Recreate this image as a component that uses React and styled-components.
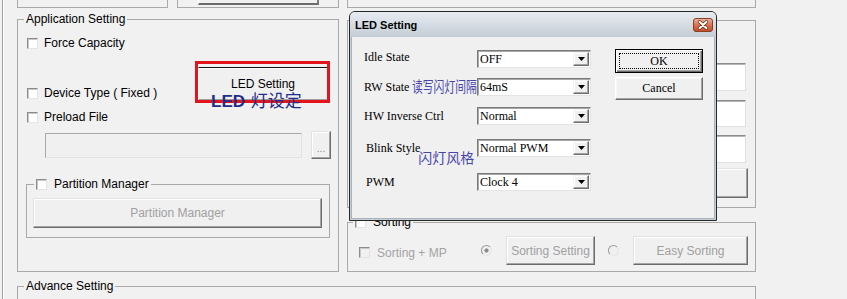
import React from "react";
import styled, { createGlobalStyle } from "styled-components";

const GlobalStyle = createGlobalStyle`
  html, body {
    margin: 0;
    padding: 0;
    background: #f1f1f1;
  }
  body {
    font-family: "Liberation Sans", Arial, sans-serif;
    font-size: 12px;
    color: #000;
  }
`;

const Screen = styled.div`
  position: relative;
  width: 847px;
  height: 299px;
  overflow: hidden;
  box-sizing: border-box;
  padding-left: 2px;
  background: #f1f1f1;
`;

const Frame = styled.div`
  height: 100%;
  border-left: 1px solid #a0a0a0;
  box-shadow: inset 1px 0 #fff;
  padding-left: 14px;
`;

const Layout = styled.div`
  display: grid;
  grid-template-columns: 322px 409px;
  grid-template-rows: 8px 260px 60px;
  column-gap: 8px;
  row-gap: 4px;
`;

const Strip = styled.div`
  display: flex;
  gap: 9px;
`;

const StubBox = styled.div`
  box-sizing: border-box;
  width: ${(p) => p.$w}px;
  height: 8px;
  border: 1px solid #a9a9a9;
  border-top: none;
  display: flex;
  align-items: flex-start;
  padding-left: 20px;
`;

const StubButton = styled.div`
  box-sizing: border-box;
  width: 121px;
  height: 5px;
  background: #f0f0f0;
  border-left: 1px solid #fff;
  border-right: 2px solid #7a7a7a;
  border-bottom: 2px solid #6a6a6a;
`;

const Group = styled.fieldset`
  margin: ${(p) => p.$margin || "0"};
  padding: 0;
  border: 1px solid #a9a9a9;
  min-width: 0;
  box-sizing: border-box;
  ${(p) => p.$grow && "flex: 1;"}
  ${(p) => p.$span && "grid-column: 1 / -1;"}
`;

const Legend = styled.legend`
  margin-left: ${(p) => p.$offset}px;
  padding: 0 2px;
  line-height: 14px;
  height: 14px;
  font-size: 12px;
`;

const LegendInner = styled.span`
  display: inline-flex;
  align-items: center;
  gap: 7px;
  height: 14px;
`;

const GroupBody = styled.div`
  padding: ${(p) => p.$pad};
  display: flex;
  flex-direction: column;
  align-items: ${(p) => p.$align || "stretch"};
`;

const CheckLabel = styled.label`
  display: flex;
  align-items: center;
  gap: ${(p) => p.$gap ?? 6}px;
  height: 14px;
  line-height: 14px;
  white-space: nowrap;
  flex-shrink: 0;
  color: ${(p) => (p.$disabled ? "#a3a3a3" : "#000")};
  ${(p) => p.$width && `width: ${p.$width}px;`}
  margin-top: ${(p) => p.$top || 0}px;
`;

const CheckBox = styled.span`
  width: 11px;
  height: 11px;
  box-sizing: border-box;
  flex-shrink: 0;
  border: 1px solid;
  border-color: #8c8c8c #e4e4e4 #e4e4e4 #8c8c8c;
  box-shadow: inset 1px 1px #c9c9c9;
  background: ${(p) => (p.$disabled ? "#f0f0f0" : "#fff")};
`;

const Radio = styled.span`
  width: 11px;
  height: 11px;
  box-sizing: border-box;
  flex-shrink: 0;
  border-radius: 50%;
  border: 1px solid;
  border-color: #9a9a9a #e6e6e6 #e6e6e6 #9a9a9a;
  background: ${(p) =>
    p.$checked
      ? "radial-gradient(circle, #8c8c8c 0 1.8px, #f0f0f0 2.4px)"
      : "#f0f0f0"};
  margin-left: ${(p) => p.$left || 0}px;
`;

const LedRow = styled.div`
  display: flex;
  justify-content: space-between;
  align-items: flex-end;
  height: 33px;
  margin-top: 17px;
`;

const LedWrap = styled.div`
  position: relative;
  width: 130px;
  height: 33px;
`;

const LedButton = styled.button`
  box-sizing: border-box;
  width: 100%;
  height: 100%;
  padding: 0;
  background: #f0f0f0;
  border: 1px solid;
  border-color: #111 #a0a0a0 #a0a0a0 #fff;
  box-shadow: inset 0 1px #fff;
  font: 12px "Liberation Sans", Arial, sans-serif;
  color: #000;
`;

const Highlight = styled.span`
  position: absolute;
  top: -6px;
  left: -3px;
  right: -2px;
  bottom: -3px;
  border: 3px solid #e3141b;
  pointer-events: none;
`;

const LedNote = styled.span`
  position: absolute;
  left: 13px;
  top: 26px;
  font-family: "Liberation Sans", "Noto Sans CJK SC", sans-serif;
  font-size: 17px;
  line-height: 18px;
  color: #1f2d8c;
  white-space: nowrap;
`;

const NoteStrong = styled.span`
  font-weight: bold;
  margin-right: 1px;
`;

const ClassicButton = styled.button`
  box-sizing: border-box;
  width: ${(p) => p.$w}px;
  height: ${(p) => p.$h}px;
  padding: 0;
  flex-shrink: 0;
  background: #f0f0f0;
  border: 1px solid;
  border-color: #e2e2e2 #6c6c6c #6c6c6c #e2e2e2;
  box-shadow: inset -1px -1px #a5a5a5, inset 1px 1px #fff;
  font: 12px "Liberation Sans", Arial, sans-serif;
  color: ${(p) => (p.disabled ? "#a0a0a0" : "#000")};
  margin: ${(p) => p.$margin || "0"};
`;

const EditRow = styled.div`
  display: flex;
  align-items: center;
  gap: 9px;
  height: 28px;
  margin: 7px -6px 0 18px;
`;

const Edit = styled.div`
  box-sizing: border-box;
  width: 257px;
  height: 25px;
  flex-shrink: 0;
  border: 1px solid;
  border-color: #a9a9a9 #e2e2e2 #e2e2e2 #a9a9a9;
  background: #f0f0f0;
`;

const DotsButton = styled(ClassicButton)`
  color: #8a8a8a;
  font-size: 10px;
  padding-top: 6px;
`;

const RightColumn = styled.div`
  display: flex;
  flex-direction: column;
  min-height: 0;
`;

const Panel = styled.div`
  box-sizing: border-box;
  margin-top: 8px;
  height: 188px;
  border: 1px solid #a9a9a9;
  padding: 42px 9px 0 0;
  display: flex;
  flex-direction: column;
  align-items: flex-end;
`;

const WhiteEdit = styled.div`
  box-sizing: border-box;
  width: 260px;
  height: ${(p) => p.$h}px;
  margin-top: ${(p) => p.$top || 0}px;
  background: #fff;
  border: 1px solid;
  border-color: #8d8d8d #e0e0e0 #e0e0e0 #8d8d8d;
  box-shadow: inset 0 1px #b5b5b5;
`;

const SortRow = styled.div`
  display: flex;
  align-items: center;
  height: 29px;
`;

/* dialog */

const Dialog = styled.div`
  position: absolute;
  left: 349px;
  top: 11px;
  width: 368px;
  height: 210px;
  box-sizing: border-box;
  border: 1px solid #262626;
  border-radius: 6px 6px 0 0;
  background: #c7cfd7;
  display: flex;
  flex-direction: column;
  font-family: "Liberation Serif", "Times New Roman", serif;
  font-size: 12px;
`;

const TitleBar = styled.div`
  height: 25px;
  flex-shrink: 0;
  box-sizing: border-box;
  border-radius: 5px 5px 0 0;
  background: linear-gradient(#e7ecf1, #c4ccd5);
  display: flex;
  align-items: center;
  justify-content: space-between;
  padding: 1px 3px 0 5px;
  font: bold 11px "Liberation Sans", Arial, sans-serif;
  color: #000;
`;

const CloseIcon = styled.svg`
  display: block;
`;

const DialogBody = styled.div`
  flex: 1;
  margin: 0 1px 1px;
  border: 1px solid #a9b1bb;
  border-top: none;
  background: #f0f0f0;
  display: flex;
  padding-left: 12px;
`;

const Fields = styled.div`
  width: 227px;
  display: flex;
  flex-direction: column;
`;

const FieldRow = styled.div`
  display: flex;
  height: 18px;
  margin-top: ${(p) => p.$gap}px;
`;

const FieldLabel = styled.div`
  width: 113px;
  height: 18px;
  flex-shrink: 0;
  box-sizing: border-box;
  line-height: 18px;
  white-space: nowrap;
  padding-left: ${(p) => p.$indent || 0}px;
  margin-top: ${(p) => p.$shift || 0}px;
`;

const Note = styled.span`
  display: inline-block;
  font-family: "Noto Sans CJK SC", sans-serif;
  color: #4646ab;
  line-height: 1;
  white-space: nowrap;
  font-size: ${(p) => (p.$squeeze ? 15 : 14)}px;
  margin-left: ${(p) => (p.$squeeze ? 3 : -2)}px;
  transform: ${(p) => (p.$squeeze ? "scaleX(0.72)" : "none")};
  transform-origin: left center;
  vertical-align: ${(p) => (p.$squeeze ? "-1px" : "-11px")};
`;

const Combo = styled.div`
  box-sizing: border-box;
  width: 114px;
  height: 18px;
  background: #fff;
  border: 1px solid;
  border-color: #7a7a7a #e4e4e4 #e4e4e4 #7a7a7a;
  box-shadow: inset 1px 1px #a8a8a8;
  display: flex;
  align-items: center;
  justify-content: space-between;
  padding-left: 2px;
  line-height: 16px;
`;

const DropButton = styled.span`
  box-sizing: border-box;
  width: 16px;
  height: 14px;
  margin-right: 1px;
  background: #f0f0f0;
  border: 1px solid;
  border-color: #f4f4f4 #6c6c6c #6c6c6c #f4f4f4;
  box-shadow: inset -1px -1px #a5a5a5, inset 1px 1px #fff;
  display: flex;
  align-items: center;
  justify-content: center;
`;

const DialogButtons = styled.div`
  display: flex;
  flex-direction: column;
  gap: 4px;
  margin: 12px 0 0 24px;
`;

const DialogButton = styled.button`
  position: relative;
  box-sizing: border-box;
  width: 88px;
  height: ${(p) => (p.$default ? 24 : 23)}px;
  padding: 0;
  background: #f0f0f0;
  border: 1px solid;
  border-color: ${(p) =>
    p.$default ? "#000" : "#fff #6c6c6c #6c6c6c #fff"};
  box-shadow: ${(p) =>
    p.$default
      ? "inset 1px 1px #fff, inset -1px -1px #6c6c6c, inset -2px -2px #a5a5a5"
      : "inset -1px -1px #a5a5a5, inset 1px 1px #f6f6f6"};
  font: 12px "Liberation Serif", "Times New Roman", serif;
  color: #000;
  &::after {
    content: "";
    position: absolute;
    inset: 3px;
    border: 1px dotted #000;
    display: ${(p) => (p.$default ? "block" : "none")};
  }
`;

const fields = [
  { label: "Idle State", value: "OFF", gap: 13, shift: -2 },
  { label: "RW State", value: "64mS", gap: 10, note: "读写闪灯间隔", squeeze: true },
  { label: "HW Inverse Ctrl", value: "Normal", gap: 11 },
  { label: "Blink Style", value: "Normal PWM", gap: 14, indent: 2, note: "闪灯风格" },
  { label: "PWM", value: "Clock 4", gap: 16, indent: 2 },
];

function Arrow() {
  return (
    <svg width="7" height="4" viewBox="0 0 7 4">
      <path d="M0 0h7L3.5 4z" fill="#000" />
    </svg>
  );
}

function CloseButton() {
  return (
    <CloseIcon width="20" height="14" viewBox="0 0 20 14">
      <defs>
        <linearGradient id="closeGrad" x1="0" y1="0" x2="0" y2="1">
          <stop offset="0" stopColor="#ecb7a2" />
          <stop offset="0.5" stopColor="#d9714f" />
          <stop offset="1" stopColor="#c24e2a" />
        </linearGradient>
      </defs>
      <rect x="0.5" y="0.5" width="19" height="13" rx="2.5" fill="url(#closeGrad)" stroke="#8a3d24" />
      <path d="M6.5 3.8l7 6.4M13.5 3.8l-7 6.4" stroke="#6e2c16" strokeWidth="3.4" strokeLinecap="round" />
      <path d="M6.5 3.8l7 6.4M13.5 3.8l-7 6.4" stroke="#fff" strokeWidth="2" strokeLinecap="round" />
    </CloseIcon>
  );
}

export default function App() {
  return (
    <>
      <GlobalStyle />
      <Screen>
        <Frame>
          <Layout>
            <Strip>
              <StubBox $w={151} />
              <StubBox $w={162}>
                <StubButton />
              </StubBox>
            </Strip>
            <Strip>
              <StubBox $w={409} />
            </Strip>

            <Group>
              <Legend $offset={6}>Application Setting</Legend>
              <GroupBody $pad="10px 10px 0 9px">
                <CheckLabel>
                  <CheckBox />
                  Force Capacity
                </CheckLabel>
                <LedRow>
                  <CheckLabel>
                    <CheckBox />
                    Device Type ( Fixed )
                  </CheckLabel>
                  <LedWrap>
                    <LedButton>LED Setting</LedButton>
                    <Highlight />
                    <LedNote>
                      <NoteStrong>LED</NoteStrong> 灯设定
                    </LedNote>
                  </LedWrap>
                </LedRow>
                <CheckLabel $top={10}>
                  <CheckBox />
                  Preload File
                </CheckLabel>
                <EditRow>
                  <Edit />
                  <DotsButton $w={20} $h={28}>...</DotsButton>
                </EditRow>
                <Group $margin="18px -2px 0 -1px">
                  <Legend $offset={7}>
                    <LegendInner>
                      <CheckBox />
                      Partition Manager
                    </LegendInner>
                  </Legend>
                  <GroupBody $pad="7px 7px 9px 6px">
                    <ClassicButton $w={289} $h={30} disabled>
                      Partition Manager
                    </ClassicButton>
                  </GroupBody>
                </Group>
              </GroupBody>
            </Group>

            <RightColumn>
              <Panel>
                <WhiteEdit $h={28} />
                <WhiteEdit $h={27} $top={9} />
                <WhiteEdit $h={28} $top={8} />
                <ClassicButton $w={262} $h={30} $margin="5px -2px 0 0" />
              </Panel>
              <Group $grow $margin="7px 0 0 0">
                <Legend $offset={5}>
                  <LegendInner>
                    <CheckBox />
                    Sorting
                  </LegendInner>
                </Legend>
                <GroupBody $pad="7px 0 0 11px">
                  <SortRow>
                    <CheckLabel $disabled $gap={7} $width={122} $top={4}>
                      <CheckBox $disabled />
                      Sorting + MP
                    </CheckLabel>
                    <Radio $checked />
                    <ClassicButton $w={89} $h={29} $margin="0 0 0 14px" disabled>
                      Sorting Setting
                    </ClassicButton>
                    <Radio $left={13} />
                    <ClassicButton $w={115} $h={29} $margin="0 0 0 14px" disabled>
                      Easy Sorting
                    </ClassicButton>
                  </SortRow>
                </GroupBody>
              </Group>
            </RightColumn>

            <Group $span $margin="3px 0 0 0">
              <Legend $offset={6}>Advance Setting</Legend>
            </Group>
          </Layout>
        </Frame>

        <Dialog>
          <TitleBar>
            LED Setting
            <CloseButton />
          </TitleBar>
          <DialogBody>
            <Fields>
              {fields.map((f) => (
                <FieldRow key={f.label} $gap={f.gap}>
                  <FieldLabel $indent={f.indent} $shift={f.shift}>
                    {f.label}
                    {f.note && <Note $squeeze={f.squeeze}>{f.note}</Note>}
                  </FieldLabel>
                  <Combo>
                    {f.value}
                    <DropButton>
                      <Arrow />
                    </DropButton>
                  </Combo>
                </FieldRow>
              ))}
            </Fields>
            <DialogButtons>
              <DialogButton $default>OK</DialogButton>
              <DialogButton>Cancel</DialogButton>
            </DialogButtons>
          </DialogBody>
        </Dialog>
      </Screen>
    </>
  );
}
